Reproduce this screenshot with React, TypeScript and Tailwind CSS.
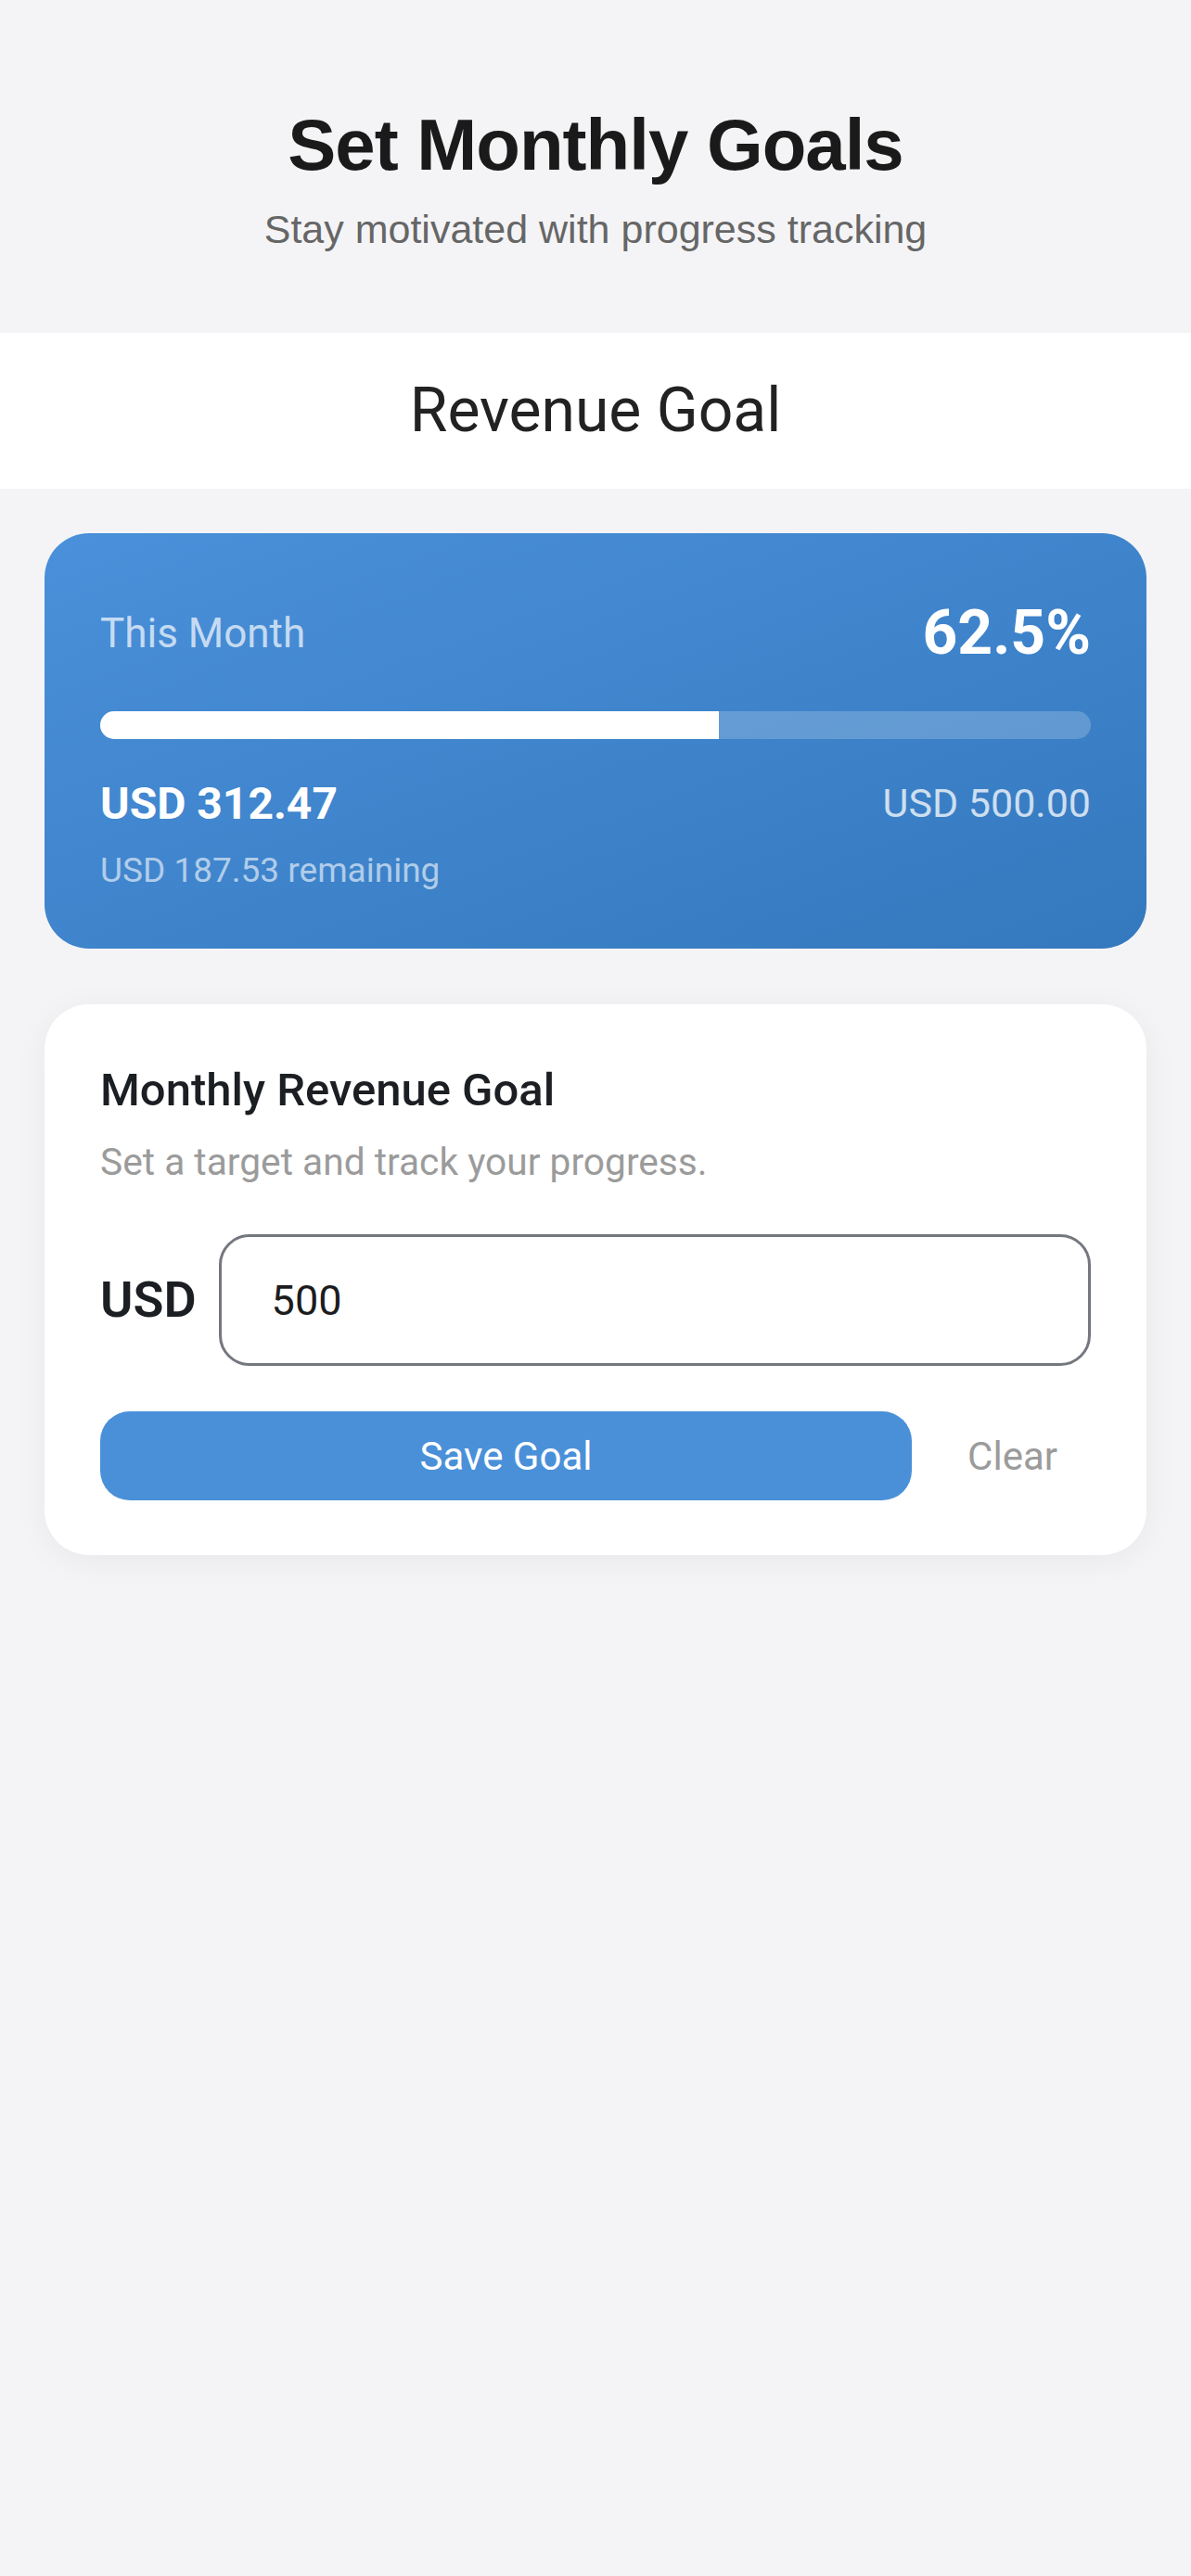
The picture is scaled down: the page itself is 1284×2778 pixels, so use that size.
import { useState } from 'react';

const GOAL = 500;
const CURRENT = 312.47;

function formatUsd(value: number) {
  return `USD ${value.toFixed(2)}`;
}

function ProgressCard({ current, goal }: { current: number; goal: number }) {
  const pct = goal > 0 ? Math.min(100, (current / goal) * 100) : 0;
  const remaining = Math.max(0, goal - current);

  return (
    <div className="rounded-[48px] bg-gradient-to-br from-[#4A90DA] to-[#3479BE] px-[60px] pt-[64px] pb-[57px] text-white">
      <div className="flex h-[88px] items-center justify-between">
        <span className="text-[44px] leading-none text-white/70">This Month</span>
        <span className="text-[66px] font-bold leading-none">{pct.toFixed(1)}%</span>
      </div>

      <div className="mt-[40px] h-[30px] w-full overflow-hidden rounded-full bg-white/20">
        <div className="h-full bg-white" style={{ width: `${pct}%` }} />
      </div>

      <div className="mt-[36px] flex h-[67px] items-center justify-between">
        <span className="text-[48px] font-bold leading-none">{formatUsd(current)}</span>
        <span className="text-[43px] leading-none text-white/75">{formatUsd(goal)}</span>
      </div>

      <div className="mt-[12px] text-[37px] leading-[54px] text-white/60">
        {formatUsd(remaining)} remaining
      </div>
    </div>
  );
}

function GoalForm() {
  const [value, setValue] = useState(String(GOAL));

  return (
    <div className="rounded-[48px] bg-white px-[60px] pt-[60px] pb-[59px] shadow-[0_6px_36px_rgba(0,0,0,0.05)]">
      <h2 className="text-[49px] font-medium leading-[66px] text-[#1b1e22]">Monthly Revenue Goal</h2>
      <p className="mt-[14px] text-[40.7px] leading-[60px] text-[#9b9b9b]">
        Set a target and track your progress.
      </p>

      <div className="mt-[48px] flex items-center gap-[24px]">
        <span className="text-[54px] font-semibold leading-none text-[#1b1e22]">USD</span>
        <input
          type="text"
          inputMode="decimal"
          value={value}
          onChange={(e) => setValue(e.target.value)}
          className="h-[142px] min-w-0 flex-1 rounded-[33px] border-[3px] border-[#74777e] bg-white pl-[54px] pr-[30px] text-[45px] text-[#1c1c1e] outline-none"
        />
      </div>

      <div className="mt-[49px] flex items-center gap-[24px]">
        <button
          type="button"
          className="h-[96px] flex-1 rounded-[32px] bg-[#4A90D9] text-[42px] text-white"
        >
          Save Goal
        </button>
        <button type="button" className="px-[36px] text-[42px] text-[#9b9b9b]">
          Clear
        </button>
      </div>
    </div>
  );
}

export default function App() {
  return (
    <div className="min-h-[2778px] bg-[#F4F4F6] font-['Roboto',sans-serif]">
      <header className="pt-[117px] pb-[91px] text-center">
        <h1 className="font-['Liberation_Sans',Arial,sans-serif] text-[78px] font-bold leading-[78px] tracking-[-1px] text-[#1a1a1a]">
          Set Monthly Goals
        </h1>
        <p className="mt-[31px] font-['Liberation_Sans',Arial,sans-serif] text-[43px] leading-[42px] text-[#666666]">
          Stay motivated with progress tracking
        </p>
      </header>

      <div className="flex h-[168px] items-center justify-center bg-white">
        <span className="text-[66px] leading-none text-[#222222]">Revenue Goal</span>
      </div>

      <main className="flex flex-col gap-[60px] px-[48px] pt-[48px]">
        <ProgressCard current={CURRENT} goal={GOAL} />
        <GoalForm />
      </main>
    </div>
  );
}
